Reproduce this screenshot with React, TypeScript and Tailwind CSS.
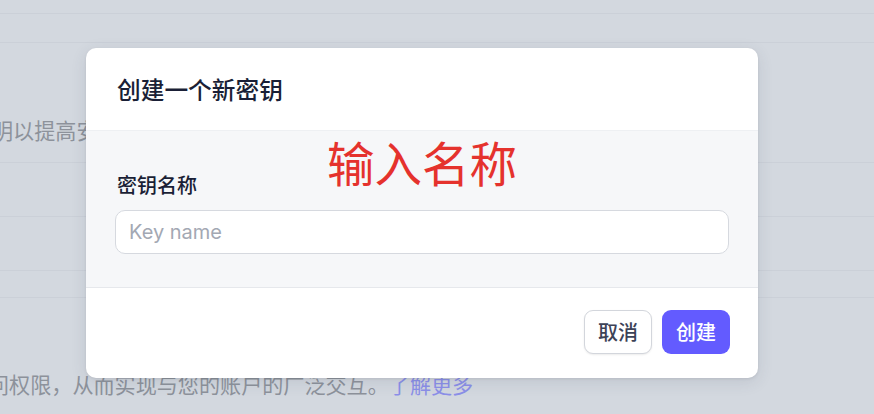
import React from "react";

const font = {
  fontFamily: '"Noto Sans CJK SC", Inter, "Noto Sans", sans-serif',
};

const Background = () => (
  <div className="flex flex-col w-full">
    <div className="h-[14px] border-b border-[#cbd0d8]" />
    <div className="h-[29px] border-b border-[#cbd0d8]" />
    <div className="h-[120px] border-b border-[#cbd0d8] pt-[72px] overflow-hidden">
      <div className="ml-[-8px] text-[21.1px] leading-[30px] text-[#8d929b] whitespace-nowrap">
        明以提高安全性
      </div>
    </div>
    <div className="h-[54px] border-b border-[#cbd0d8]" />
    <div className="h-[54px] border-b border-[#cbd0d8]" />
    <div className="h-[27px] border-b border-[#cbd0d8]" />
    <div className="pt-[71px] overflow-hidden">
      <div className="ml-[-12px] text-[21.1px] leading-[30px] text-[#8d929b] whitespace-nowrap">
        问权限，从而实现与您的账户的广泛交互。
        <span className="text-[#8b8fe8]">了解更多</span>
      </div>
    </div>
  </div>
);

const CreateKeyModal = () => (
  <div className="absolute left-[86px] top-[48px] w-[672px] h-[330px] bg-white rounded-[10px] shadow-[0_4px_16px_rgba(60,66,87,0.12),0_1px_3px_rgba(0,0,0,0.08)] overflow-hidden flex flex-col">
    <div className="h-[83px] flex items-center px-[31px] border-b border-[#eef0f3]">
      <h2 className="text-[23.7px] font-medium text-[#1a1f36] leading-none mt-[2px]">
        创建一个新密钥
      </h2>
    </div>

    <div className="relative h-[157px] bg-[#f6f7f9] border-b border-[#e6e8ec] px-[29px] pt-[41px]">
      <label className="block text-[20px] font-medium text-[#1a1f36] leading-[26px] ml-[2px]">
        密钥名称
      </label>
      <div className="mt-[12px] h-[44px] bg-white border border-[#d6d9df] rounded-[10px] flex items-center px-[13px]">
        <span className="text-[20px] text-[#a3a8b3]" style={{ fontFamily: 'Inter, "Noto Sans", sans-serif' }}>
          Key name
        </span>
      </div>
      <span className="absolute left-[241px] top-[2px] text-[47.5px] leading-[58px] text-[#e5322d]">
        输入名称
      </span>
    </div>

    <div className="flex-1 flex items-center justify-end gap-[10px] px-[28px] pb-[2px]">
      <button className="h-[44px] px-[13px] rounded-[9px] bg-white border border-[#d3d6dc] shadow-[0_1px_2px_rgba(0,0,0,0.08)] text-[20px] font-medium text-[#3c4257]">
        取消
      </button>
      <button className="h-[44px] px-[14px] rounded-[9px] bg-[#635bff] text-[20px] font-medium text-white">
        创建
      </button>
    </div>
  </div>
);

export default function App() {
  return (
    <div className="relative w-[874px] h-[414px] overflow-hidden bg-[#d3d8df]" style={font}>
      <Background />
      <CreateKeyModal />
    </div>
  );
}
